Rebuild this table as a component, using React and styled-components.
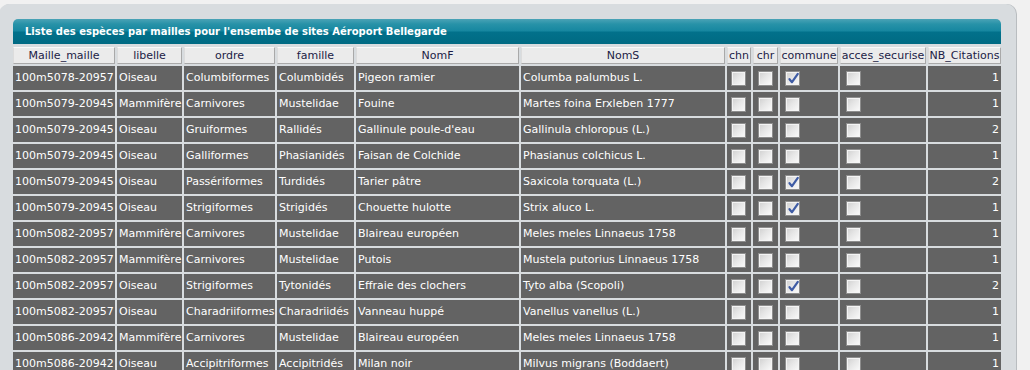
import React from "react";
import styled, { createGlobalStyle } from "styled-components";

const Global = createGlobalStyle`
  html, body { margin: 0; padding: 0; background: #f1f1f1; }
  body { font-family: "DejaVu Sans", Verdana, sans-serif; font-size: 11px; }
`;

const Panel = styled.div`
  margin-top: 4px;
  margin-left: -1px;
  width: 1017px;
  height: 400px;
  box-sizing: border-box;
  padding: 15px 15px 0 14px;
  background: #d8dcdf;
  border-radius: 10px 10px 0 0;
  box-shadow: 1px 0 0 #b9bdc0;
`;

const TitleBar = styled.div`
  height: 25px;
  box-sizing: border-box;
  padding: 0 12px;
  display: flex;
  align-items: center;
  color: #ffffff;
  font-weight: bold;
  font-size: 10px;
  border-radius: 5px 5px 0 0;
  background: linear-gradient(
    to bottom,
    #4aa3b6 0%,
    #2892a8 20%,
    #1687a0 48%,
    #02718b 52%,
    #006a83 100%
  );
`;

const Table = styled.table`
  border-collapse: separate;
  border-spacing: 2px;
  table-layout: fixed;
  width: 992px;
  margin: 1px 0 0 -2px;
`;

const Th = styled.th`
  height: 17px;
  box-sizing: border-box;
  padding: 0;
  font-weight: normal;
  font-size: 11px;
  color: #1c1c46;
  text-align: center;
  white-space: nowrap;
  overflow: hidden;
  background: #ebebeb;
  border: 1px solid;
  border-color: #f9f9f9 #a9a9a9 #a9a9a9 #dcdcdc;
  line-height: 15px;
`;

const Td = styled.td`
  height: 24px;
  box-sizing: border-box;
  padding: 0 ${(p) => (p.$num ? "2px" : "0")} 0 2px;
  background: #636363;
  color: #ffffff;
  font-size: 11px;
  white-space: nowrap;
  overflow: hidden;
  text-align: ${(p) => (p.$num ? "right" : "left")};
  vertical-align: middle;
  line-height: 24px;
`;

const BoxCell = styled.td`
  height: 24px;
  box-sizing: border-box;
  padding: 0 0 0 ${(p) => p.$pad}px;
  background: #636363;
  vertical-align: middle;
  line-height: 0;
`;

const Box = styled.span`
  display: inline-block;
  position: relative;
  width: 15px;
  height: 15px;
  box-sizing: border-box;
  margin-top: 1px;
  border: 1px solid #8e8e8e;
  box-shadow: inset 0 0 0 1px #f4f4f4;
  background: linear-gradient(135deg, #cfcfcf 0%, #e6e6e6 45%, #fbfbfb 100%);
`;

const Tick = styled.svg`
  position: absolute;
  left: 1px;
  top: 0px;
`;

const Checkbox = ({ checked }) => (
  <Box>
    {checked && (
      <Tick width="13" height="13" viewBox="0 0 13 13">
        <path
          d="M2.5 7.2 L5 10.2 L10.8 1.8"
          fill="none"
          stroke="#3f5ca5"
          strokeWidth="2.2"
          strokeLinecap="round"
          strokeLinejoin="round"
        />
      </Tick>
    )}
  </Box>
);

const cols = [102, 65, 91, 77, 163, 204, 24, 25, 58, 86, 73];
const heads = [
  "Maille_maille",
  "libelle",
  "ordre",
  "famille",
  "NomF",
  "NomS",
  "chn",
  "chr",
  "commune",
  "acces_securise",
  "NB_Citations",
];

const rows = [
  ["100m5078-20957", "Oiseau", "Columbiformes", "Columbidés", "Pigeon ramier", "Columba palumbus L.", true, 1],
  ["100m5079-20945", "Mammifère", "Carnivores", "Mustelidae", "Fouine", "Martes foina Erxleben 1777", false, 1],
  ["100m5079-20945", "Oiseau", "Gruiformes", "Rallidés", "Gallinule poule-d'eau", "Gallinula chloropus (L.)", false, 2],
  ["100m5079-20945", "Oiseau", "Galliformes", "Phasianidés", "Faisan de Colchide", "Phasianus colchicus L.", false, 1],
  ["100m5079-20945", "Oiseau", "Passériformes", "Turdidés", "Tarier pâtre", "Saxicola torquata (L.)", true, 2],
  ["100m5079-20945", "Oiseau", "Strigiformes", "Strigidés", "Chouette hulotte", "Strix aluco L.", true, 1],
  ["100m5082-20957", "Mammifère", "Carnivores", "Mustelidae", "Blaireau européen", "Meles meles Linnaeus 1758", false, 1],
  ["100m5082-20957", "Mammifère", "Carnivores", "Mustelidae", "Putois", "Mustela putorius Linnaeus 1758", false, 1],
  ["100m5082-20957", "Oiseau", "Strigiformes", "Tytonidés", "Effraie des clochers", "Tyto alba (Scopoli)", true, 2],
  ["100m5082-20957", "Oiseau", "Charadriiformes", "Charadriidés", "Vanneau huppé", "Vanellus vanellus (L.)", false, 1],
  ["100m5086-20942", "Mammifère", "Carnivores", "Mustelidae", "Blaireau européen", "Meles meles Linnaeus 1758", false, 1],
  ["100m5086-20942", "Oiseau", "Accipitriformes", "Accipitridés", "Milan noir", "Milvus migrans (Boddaert)", false, 1],
];

export default function App() {
  return (
    <>
      <Global />
      <Panel>
        <TitleBar>
          Liste des espèces par mailles pour l'ensembe de sites Aéroport Bellegarde
        </TitleBar>
        <Table>
          <colgroup>
            {cols.map((w, i) => (
              <col key={i} style={{ width: w }} />
            ))}
          </colgroup>
          <thead>
            <tr>
              {heads.map((h) => (
                <Th key={h}>{h}</Th>
              ))}
            </tr>
          </thead>
          <tbody>
            {rows.map((r, i) => (
              <tr key={i}>
                {r.slice(0, 6).map((c, j) => (
                  <Td key={j}>{c}</Td>
                ))}
                <BoxCell $pad={4}>
                  <Checkbox />
                </BoxCell>
                <BoxCell $pad={5}>
                  <Checkbox />
                </BoxCell>
                <BoxCell $pad={5}>
                  <Checkbox checked={r[6]} />
                </BoxCell>
                <BoxCell $pad={6}>
                  <Checkbox />
                </BoxCell>
                <Td $num>{r[7]}</Td>
              </tr>
            ))}
          </tbody>
        </Table>
      </Panel>
    </>
  );
}
